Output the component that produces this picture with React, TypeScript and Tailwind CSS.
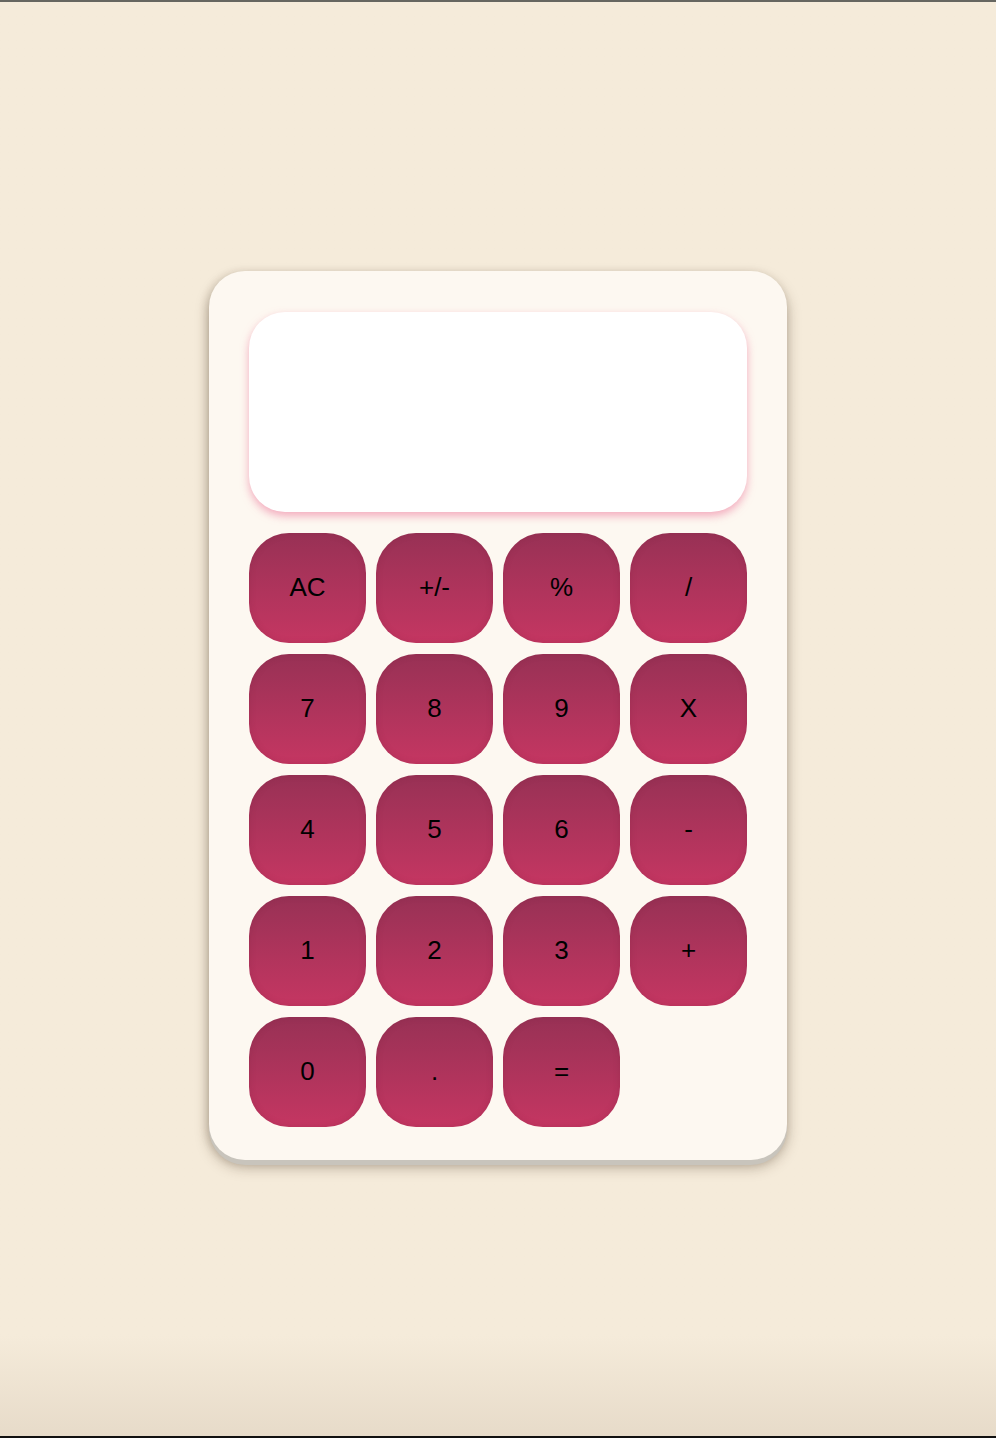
const keys = ['AC', '+/-', '%', '/', '7', '8', '9', 'X', '4', '5', '6', '-', '1', '2', '3', '+', '0', '.', '='];

const Key = ({ label }: { label: string }) => (
  <button className="h-[110px] rounded-[40px] bg-linear-to-b from-[#983155] to-[#c53662] text-[26px] text-black shadow-[inset_0_0_6px_rgba(120,30,60,0.25)]">
    {label}
  </button>
);

export default function App() {
  return (
    <div
      className="flex h-[1438px] w-full items-center justify-center border-t-2 border-b-2 border-t-[#666660] border-b-[#111] bg-linear-to-b from-[#f5ebda] from-93% to-[#e7dbc9]"
      style={{ fontFamily: '"Liberation Sans", Arial, sans-serif' }}
    >
      <div className="mb-2 w-[578px] rounded-[36px] bg-[#fdf8f1] px-10 pt-[41px] pb-[33px] shadow-[0_5px_0_#c8c4bc,0_7px_14px_rgba(60,40,20,0.35),-2px_2px_8px_rgba(60,40,20,0.15)]">
        <div className="h-[200px] rounded-[36px] bg-white shadow-[0_4px_8px_rgba(236,120,155,0.6)]" />
        <div className="mt-[21px] grid grid-cols-4 gap-x-[10px] gap-y-[11px]">
          {keys.map((k) => (
            <Key key={k} label={k} />
          ))}
        </div>
      </div>
    </div>
  );
}
